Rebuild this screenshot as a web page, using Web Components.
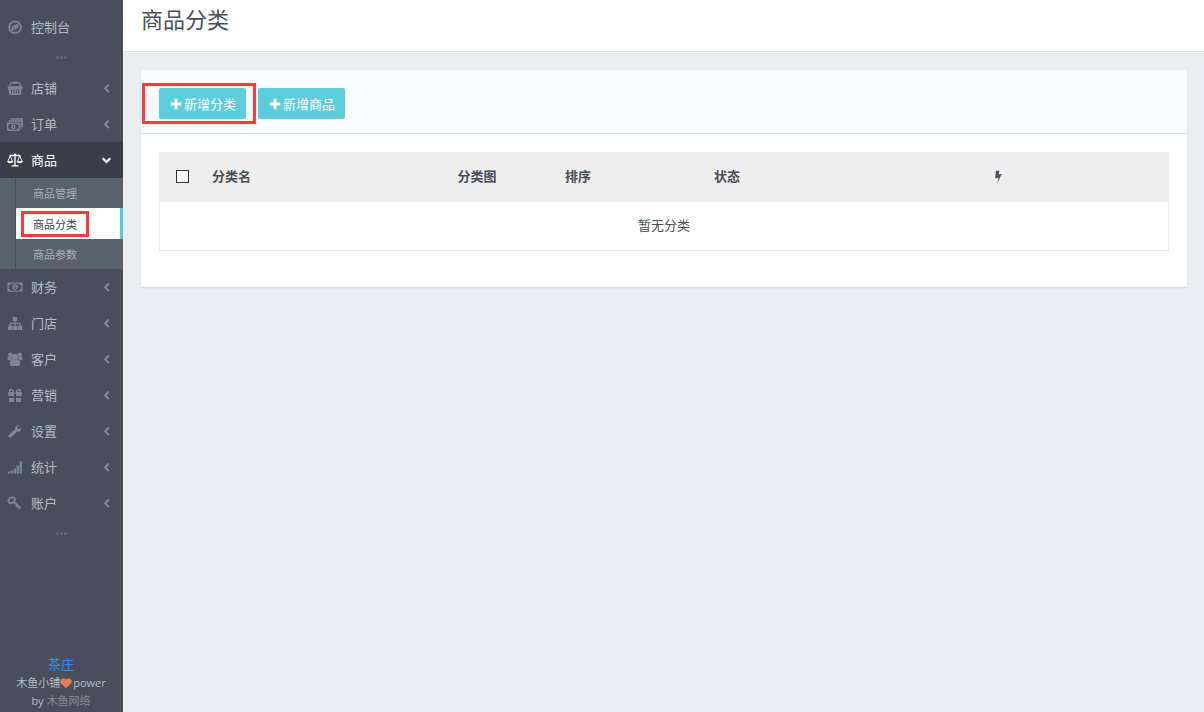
<!DOCTYPE html>
<html lang="zh-CN">
<head>
<meta charset="utf-8">
<title>商品分类</title>
<style>
  body {
    margin: 0;
    font-family: "Noto Sans CJK SC", "Liberation Sans", sans-serif;
    font-size: 13px;
    color: #484f5a;
    background: #eaedf2;
  }
</style>
</head>
<body>
<app-shell>
  <side-bar slot="nav">
    <nav-item icon="compass">控制台</nav-item>
    <nav-dots></nav-dots>
    <nav-item icon="basket" arrow="left">店铺</nav-item>
    <nav-item icon="bills" arrow="left">订单</nav-item>
    <nav-item icon="scale" arrow="down" active>商品</nav-item>
    <nav-submenu>
      <nav-subitem>商品管理</nav-subitem>
      <nav-subitem active><mark-box class="tight">商品分类</mark-box></nav-subitem>
      <nav-subitem>商品参数</nav-subitem>
    </nav-submenu>
    <nav-item icon="money" arrow="left">财务</nav-item>
    <nav-item icon="sitemap" arrow="left">门店</nav-item>
    <nav-item icon="users" arrow="left">客户</nav-item>
    <nav-item icon="gift" arrow="left">营销</nav-item>
    <nav-item icon="wrench" arrow="left">设置</nav-item>
    <nav-item icon="signal" arrow="left">统计</nav-item>
    <nav-item icon="key" arrow="left">账户</nav-item>
    <nav-dots></nav-dots>
    <side-footer slot="footer"></side-footer>
  </side-bar>
  <page-header>商品分类</page-header>
  <content-panel>
    <mark-box slot="tools" class="wide"><action-button>新增分类</action-button></mark-box>
    <action-button slot="tools">新增商品</action-button>
    <category-table></category-table>
  </content-panel>
</app-shell>
<script>
const ICONS = {
  compass: '<circle cx="8" cy="8.300" r="5.900" fill="none" stroke="currentColor" stroke-width="1.7"/><path fill-rule="evenodd" d="M11.4 4.6v4.2l-6.8 3.2V7.7zM6.200 8.5v1.5l2.300-1.100z"/>',
  basket: '<path fill-rule="evenodd" d="M.7 6.300h14.8v2.300h-.7L13.8 15H2.4L1.400 8.600H.7zM4 9.200v4.200h1V9.200zm2.400 0v4.200h1V9.200zm2.400 0v4.200h1V9.200zm2.400 0v4.200h1V9.200z"/><path d="M2.600 6.500 4.100 2.600h8l1.500 3.900" fill="none" stroke="currentColor" stroke-width="1.200"/><path d="M6 1.600h4v2H6z"/>',
  bills: '<path fill-rule="evenodd" d="M0 6.500h12.800V15H0zm1.200 2.700v3.100q1.200.3 1.500 1.500h7.400q.3-1.200 1.500-1.500V9.200q-1.200-.3-1.500-1.500H2.700Q2.400 8.900 1.200 9.200z"/><path fill-rule="evenodd" d="M6.400 8.300c2.900 0 2.900 4.900 0 4.900s-2.900-4.900 0-4.900zM6 9.600v2.300h.8V9.600z"/><path d="M1.800 5h12.400v8M3.600 3h12v8" fill="none" stroke="currentColor" stroke-width="1.300"/>',
  scale: '<path d="M2.500 3.500h11M8 2v11.500M4.500 13.800h7" fill="none" stroke="currentColor" stroke-width="1.300"/><circle cx="8" cy="2.700" r="1.300"/><path d="M3.200 4 .8 9.500h4.900zM12.800 4l-2.400 5.500h4.900z" fill="none" stroke="currentColor" stroke-width=".9"/><path d="M0 9.200h6.500a3.300 2.500 0 0 1-6.500 0zM9.500 9.200H16a3.300 2.500 0 0 1-6.500 0z"/>',
  money: '<path fill-rule="evenodd" d="M.5 3.500h15v9.300H.5zm1.200 2.900v3.500a2 2 0 0 1 1.900 1.800h8.800a2 2 0 0 1 1.900-1.800V6.400a2 2 0 0 1-1.900-1.800H3.600a2 2 0 0 1-1.900 1.800z"/><path fill-rule="evenodd" d="M8 5.100c3.500 0 3.500 6 0 6s-3.500-6 0-6zm-.9 1.500v.8l.5-.2v1.900h-.7v.7h2.200v-.7h-.6V6.300h-.6z"/>',
  sitemap: '<path d="M5.700 2h4.600v4H5.700zM1 10.700h4.300v4.200H1zM5.900 10.700h4.300v4.200H5.900zM10.900 10.700h4.300v4.200h-4.300z"/><path d="M8 5.500v6M3.100 11V8.400h9.900V11" fill="none" stroke="currentColor" stroke-width="1.200"/>',
  users: '<circle cx="3.300" cy="3.700" r="2.200"/><circle cx="12.700" cy="3.700" r="2.200"/><circle cx="8" cy="5.700" r="3"/><path d="M.6 9.200V7.200Q.6 5.400 2 5.800q1.300.7 2.600 0Q4.600 7.900 5.500 9.200zM15.400 9.200V7.200q0-1.800-1.400-1.400-1.300.7-2.600 0 0 2.100-.9 3.400zM2.800 12.900q0-4.900 2.800-4.900Q8 10 10.400 8q2.800 0 2.800 4.900 0 2-2.200 2H5q-2.200 0-2.200-2z"/>',
  gift: '<path d="M1.200 5.200h5.800v3.900H1.200zM9 5.200h5.800v3.900H9zM2 11h5v4H2zM9 11h5v4H9z"/><path d="M6.800 5.700C6.300 2.200 2.600 1.700 2.600 4S5.100 5.800 6.800 5.700zM9.200 5.700c.5-3.500 4.200-4 4.200-1.700S10.900 5.800 9.200 5.700z" fill="none" stroke="currentColor" stroke-width="1.500"/>',
  wrench: '<path d="M3 13.200 9.800 6.800" fill="none" stroke="currentColor" stroke-width="3.200" stroke-linecap="round"/><path d="M12.800 2.100Q10.900 1.500 9.200 2.900 7.300 4.800 8.300 7.200q1.500 2.400 4 1.200 2-1 2-3.600L11.900 6.200 10.300 5.400 10.400 3.500z"/>',
  signal: '<path d="M.8 12.500H3v2H.8zM3.700 11.500h2.200v3H3.700zM6.700 9.500h2.200v5H6.700zM9.700 6.500h2.200v8H9.700zM12.700 2.500h2.200v12h-2.200z"/>',
  key: '<ellipse cx="4.700" cy="5.200" rx="3.400" ry="2.600" transform="rotate(-35 4.700 5.200)" fill="none" stroke="currentColor" stroke-width="1.900"/><path d="m6.700 6.900 7 6.100M10.800 10.300l-1.700 2M13 12l-1.500 2" fill="none" stroke="currentColor" stroke-width="2"/>',
  left: '<path d="M10.500 3.800 6.500 7.800l4 4" fill="none" stroke="currentColor" stroke-width="2.200"/>',
  down: '<path d="m4 5.500 4 4 4-4" fill="none" stroke="currentColor" stroke-width="2.300"/>',
  plus: '<path d="M6.200 2h3.600v4.200H14v3.600H9.800V14H6.200V9.800H2V6.200h4.200z"/>',
  heart: '<path d="M8 15 1.400 8.700C-2 5 3-1.200 8 3.500c5-4.700 10 1.500 6.600 5.200z"/>',
  bolt: '<path d="M5.600.8h4.200L8.600 5l3.600-.8L7.200 15.500l1.400-6.800-3.800.9z"/>'
};

function define(name, html, setup, observed = []) {
  const template = document.createElement('template');
  template.innerHTML = html;
  customElements.define(name, class extends HTMLElement {
    static observedAttributes = observed;
    constructor() {
      super();
      this.attachShadow({ mode: 'open' }).append(template.content.cloneNode(true));
    }
    connectedCallback() {
      if (setup) setup(this, this.shadowRoot);
    }
    attributeChangedCallback() {
      if (setup) setup(this, this.shadowRoot);
    }
  });
}

define('ui-icon', `
  <style>
    :host { display: inline-flex; flex: none; width: 16px; height: 16px; }
    svg { width: 100%; height: 100%; fill: currentColor; }
  </style>
  <svg viewBox="0 0 16 16" aria-hidden="true"></svg>`,
  (el, root) => { root.querySelector('svg').innerHTML = ICONS[el.getAttribute('name')] || ''; },
  ['name']);

define('app-shell', `
  <style>
    :host { display: grid; grid-template-columns: 123px 1fr; min-height: 100vh; }
    main { min-width: 0; }
  </style>
  <slot name="nav"></slot>
  <main><slot></slot></main>`);

define('side-bar', `
  <style>
    :host { display: flex; flex-direction: column; background: #484f5a; color: #b4bcc6; }
    nav { flex: 1; padding-top: 9px; }
  </style>
  <nav aria-label="主菜单"><slot></slot></nav>
  <slot name="footer"></slot>`);

define('nav-item', `
  <style>
    :host { display: block; }
    a { display: flex; align-items: center; gap: 8px; height: 36px; padding: 0 9px 0 7px; color: inherit; text-decoration: none; }
    .label { flex: 1; line-height: 20px; padding-bottom: 1px; }
    ui-icon { color: #7f8791; }
    :host([active]) a { background: #393f48; color: #fff; }
    :host([active]) ui-icon { color: #fff; }
    .arrow { width: 15px; height: 15px; }
  </style>
  <a href="#"><ui-icon class="icon"></ui-icon><span class="label"><slot></slot></span></a>`,
  (el, root) => {
    root.querySelector('.icon').setAttribute('name', el.getAttribute('icon'));
    const arrow = el.getAttribute('arrow');
    if (arrow && !root.querySelector('.arrow')) {
      const mark = document.createElement('ui-icon');
      mark.className = 'arrow';
      mark.setAttribute('name', arrow);
      root.querySelector('a').append(mark);
    }
  });

define('nav-dots', `
  <style>
    :host { display: flex; align-items: center; justify-content: center; gap: 1px; height: 25px; }
    i { width: 3px; height: 3px; border-radius: 1px; background: #5f6670; }
  </style>
  <i></i><i></i><i></i>`);

define('nav-submenu', `
  <style>
    :host { display: block; background: #59616b; padding-left: 15px; }
    div { border-left: 1px solid #484f5a; }
  </style>
  <div><slot></slot></div>`);

define('nav-subitem', `
  <style>
    :host { display: block; font-size: 11px; color: #a9afb6; }
    a { display: flex; align-items: center; height: 30px; padding-left: 17px; box-sizing: border-box; line-height: 18px; color: inherit; text-decoration: none; }
    :host([active]) a { height: 31px; background: #fff; color: #393f48; border-right: 3px solid #58cbdc; }
  </style>
  <a href="#"><slot></slot></a>`);

define('mark-box', `
  <style>
    :host { display: inline-block; position: relative; }
    i { position: absolute; border: 3px solid #fb3a3a; pointer-events: none; }
    :host(.tight) i { inset: -4px -12px -4px -12px; }
    :host(.wide) i { inset: -5px -10px -5px -17px; }
  </style>
  <slot></slot><i></i>`);

define('side-footer', `
  <style>
    :host { display: block; padding: 0 13px 2px 12px; text-align: center; font: 11px/18px "Open Sans", "Noto Sans CJK SC", sans-serif; }
    .shop { display: block; font-size: 13px; line-height: 20px; color: #2d8cff; text-decoration: none; }
    .line { display: flex; align-items: center; justify-content: center; }
    .by { gap: 3px; }
    .heart { width: 12px; height: 12px; margin-right: 1px; color: #e27b5a; }
    .maker { color: #868b8f; text-decoration: none; }
  </style>
  <a class="shop" href="#">茶庄</a>
  <div class="line"><span>木鱼小铺</span><ui-icon class="heart" name="heart"></ui-icon><span>power</span></div>
  <div class="line by"><span>by</span><a class="maker" href="#">木鱼网络</a></div>`);

define('page-header', `
  <style>
    :host { display: block; background: #fff; border-bottom: 1px solid #dbe0e8; padding: 2px 18px 17px; }
    h1 { margin: 0; font-size: 22px; font-weight: 400; line-height: 32px; }
  </style>
  <h1><slot></slot></h1>`);

define('content-panel', `
  <style>
    :host { display: block; margin: 18px 17px 18px 18px; background: #fff; border-radius: 2px; box-shadow: 0 1px 2px #d5dae1; }
    header { display: flex; gap: 12px; padding: 18px 18px 14px; background: #f9fafc; border-bottom: 1px solid #dbe0e8; border-radius: 2px 2px 0 0; }
    section { padding: 18px 18px 36px; }
  </style>
  <header><slot name="tools"></slot></header>
  <section><slot></slot></section>`);

define('action-button', `
  <style>
    :host { display: block; }
    button { display: flex; align-items: center; justify-content: center; gap: 1px; height: 31px; padding: 0 10px; border: 0; border-radius: 2px; background: #5bcddd; color: #fff; font: inherit; line-height: 20px; cursor: pointer; }
    ui-icon { width: 14px; height: 14px; }
  </style>
  <button type="button"><ui-icon name="plus"></ui-icon><span><slot></slot></span></button>`);

define('category-table', `
  <style>
    :host { display: block; }
    table { width: 100%; table-layout: fixed; border-collapse: separate; border-spacing: 0; border: 1px solid #eaecf1; border-top: 0; }
    .pick { width: 44px; } .name { width: 221px; } .picture { width: 104px; }
    .order { width: 98px; } .state { width: 200px; } .act { width: 341px; }
    th, td { padding: 0 8px 2px; text-align: center; line-height: 20px; }
    th { height: 48px; background: #eee; font-weight: 700; }
    td { height: 46px; }
    th.title { text-align: left; }
    th:first-child { padding: 0 0 2px; }
    input { appearance: none; display: block; box-sizing: border-box; width: 13px; height: 13px; margin: 0 auto; border: 1px solid #333; background: #fff; }
    ui-icon { width: 14px; height: 14px; vertical-align: middle; }
  </style>
  <table>
    <colgroup><col class="pick"><col class="name"><col class="picture"><col class="order"><col class="state"><col class="act"></colgroup>
    <thead><tr>
      <th scope="col"><input type="checkbox" aria-label="全选"></th>
      <th scope="col" class="title">分类名</th>
      <th scope="col">分类图</th>
      <th scope="col">排序</th>
      <th scope="col">状态</th>
      <th scope="col" aria-label="操作"><ui-icon name="bolt"></ui-icon></th>
    </tr></thead>
    <tbody><tr><td colspan="6">暂无分类</td></tr></tbody>
  </table>`);
</script>
</body>
</html>
